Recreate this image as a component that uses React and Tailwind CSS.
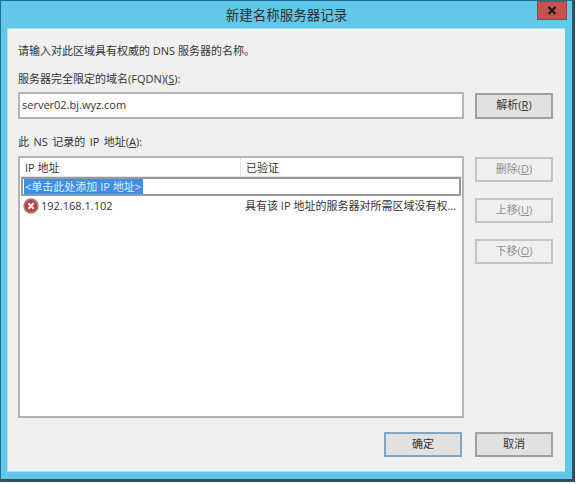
const font = { fontFamily: '"Open Sans", "Noto Sans CJK SC", sans-serif' };

function Btn({ children, disabled, primary, className = "" }) {
  const look = disabled
    ? "border-[#c4c4c4] text-[#8f8f8f] bg-[#efefef]"
    : primary
      ? "border-[#7fa6c4] text-[#333] bg-[#e1e1e1]"
      : "border-[#a0a0a0] text-[#333] bg-[#e1e1e1]";
  return (
    <div className={`w-[78px] flex items-center justify-center border-2 text-[11px] ${look} ${className}`}>
      <span>{children}</span>
    </div>
  );
}

const U = ({ children }) => <span className="underline">{children}</span>;

export default function App() {
  return (
    <div className="w-[576px] h-[484px] bg-white overflow-hidden" style={font}>
      <div className="w-[575px] h-[482px] border-r-[3px] border-b-[3px] border-l border-t border-r-[#33505f] border-b-[#33505f] border-l-[#1f6f8f] border-t-[#1f6f8f] bg-[#62c8ea] flex flex-col">
        <div className="h-[27px] shrink-0 flex justify-center relative">
          <span className="text-[13.5px] leading-[28px] text-[#2f2f2f]">新建名称服务器记录</span>
          <div className="absolute right-[5px] top-0 w-[30px] h-[19px] bg-[#c75050] border border-[#a04040] flex items-center justify-center">
            <svg width="10" height="9" viewBox="0 0 10 9">
              <path d="M1.5 1 L8.5 8 M8.5 1 L1.5 8" stroke="#1a1a1a" strokeWidth="2.2" />
            </svg>
          </div>
        </div>
        <div className="ml-[6px] mr-[7px] mb-[7px] flex-1 min-h-0 bg-[#f0f0f0] border-l border-t border-b border-[#a9e2f5] pl-[10px] pr-[12px] flex flex-col text-[11px] text-[#333]">
          <div className="mt-[14px] h-[16px] leading-[16px]">请输入对此区域具有权威的 DNS 服务器的名称。</div>
          <div className="mt-[12px] h-[16px] leading-[16px]">服务器完全限定的域名(FQDN)(<U>S</U>):</div>
          <div className="mt-[5px] flex gap-[11px] items-center">
            <div className="w-[446px] h-[27px] bg-white border-2 border-[#b4b4b4] pl-[2px] pt-[3px] text-[11px] leading-[16px] text-[#333]">server02.bj.wyz.com</div>
            <Btn className="h-[26px]">解析(<U>R</U>)</Btn>
          </div>
          <div className="mt-[15px] h-[16px] leading-[16px] [word-spacing:1.6px]">此 NS 记录的 IP 地址(<U>A</U>):</div>
          <div className="mt-[6px] flex gap-[11px] items-start">
            <div className="w-[446px] h-[262px] bg-white border-2 border-[#b4b4b4] flex flex-col">
              <div className="h-[19px] shrink-0 flex border-b border-[#e3e3e3] leading-[19px]">
                <div className="w-[221px] pl-[5px] border-r border-[#e3e3e3]">IP 地址</div>
                <div className="pl-[5px]">已验证</div>
              </div>
              <div className="h-[19px] shrink-0 bg-white border-2 border-[#999999] mr-[1px] flex items-center pl-[1px] ml-[1px]">
                <span className="bg-[#3f8fe6] text-[#dfefff] leading-[15px] pl-px pr-[2px]">&lt;单击此处添加 IP 地址&gt;</span>
              </div>
              <div className="flex h-[18px] mt-[1px] items-center">
                <div className="w-[221px] pl-[3px] flex items-center gap-[2px] text-[11px]">
                  <svg width="16" height="16" viewBox="0 0 15 15" className="shrink-0">
                    <circle cx="7.5" cy="7.5" r="7.2" fill="#8a8a8a" />
                    <circle cx="7.5" cy="7.5" r="5.6" fill="#d5323a" />
                    <path d="M5 5 L10 10 M10 5 L5 10" stroke="#fff" strokeWidth="2" />
                  </svg>
                  <span>192.168.1.102</span>
                </div>
                <div className="pl-[4px] whitespace-nowrap">具有该 IP 地址的服务器对所需区域没有权...</div>
              </div>
            </div>
            <div className="flex flex-col">
              <Btn disabled className="h-[25px] mt-[1px]">删除(<U>D</U>)</Btn>
              <Btn disabled className="h-[25px] mt-[16px]">上移(<U>U</U>)</Btn>
              <Btn disabled className="h-[25px] mt-[16px]">下移(<U>O</U>)</Btn>
            </div>
          </div>
          <div className="mt-[14px] flex justify-end gap-[13px]">
            <Btn primary className="h-[25px]">确定</Btn>
            <Btn className="h-[25px]">取消</Btn>
          </div>
        </div>
      </div>
    </div>
  );
}
